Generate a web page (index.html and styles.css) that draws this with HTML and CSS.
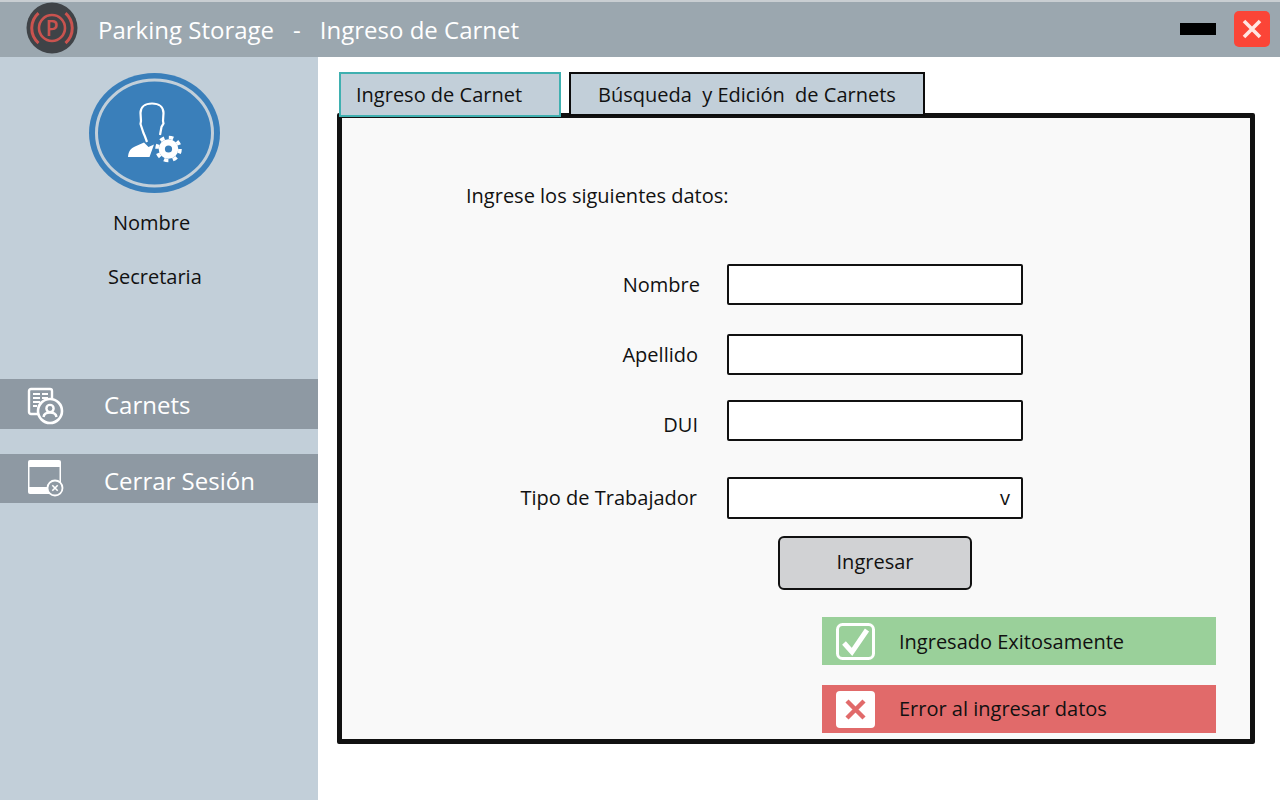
FILE: index.html
```html
<!DOCTYPE html>
<html lang="es">
<head>
    <meta charset="UTF-8">
    <meta name="viewport" content="width=device-width, initial-scale=1.0">
    <title>Parking Storage - Ingreso de Carnet</title>
    <link rel="stylesheet" href="styles.css">
</head>
<body>
    <header class="titlebar">
        <svg class="logo" width="52" height="52" viewBox="0 0 52 52">
            <circle cx="26" cy="26" r="25.5" fill="#3f4347"/>
            <circle cx="26" cy="26" r="13" fill="none" stroke="#c9534f" stroke-width="2.6"/>
            <path d="M12.5 11 A20 20 0 0 0 12.5 41 M39.5 11 A20 20 0 0 1 39.5 41" fill="none" stroke="#c9534f" stroke-width="3"/>
            <text class="logo-letter" x="26" y="33.5" text-anchor="middle">P</text>
        </svg>
        <div class="app-title">Parking Storage</div>
        <div class="app-dash">-</div>
        <div class="app-section">Ingreso de Carnet</div>
        <div class="minimize"></div>
        <div class="close">
            <svg width="20" height="20" viewBox="0 0 20 20">
                <path d="M2 2 L18 18 M18 2 L2 18" stroke="#ffe6e2" stroke-width="3.6"/>
            </svg>
        </div>
    </header>

    <div class="layout">
        <aside class="sidebar">
            <svg class="avatar" width="132" height="120" viewBox="0 0 132 120">
                <ellipse cx="65.5" cy="60" rx="65.5" ry="60" fill="#3a7fba"/>
                <ellipse cx="65.5" cy="60" rx="58" ry="53" fill="#3a7fba" stroke="#c2cfd9" stroke-width="3"/>
                <path d="M58 69 L56 63.5 L54.5 60 L52.5 54 L51.5 51 L52 48 L51.5 40 C51.5 34 56 30.5 63 30.5 C70 30.5 74.5 34 74.5 40 L74 48 L74.5 50.5 L72.5 54 L71 62" fill="none" stroke="#fff" stroke-width="2.2"/>
                <path d="M39 84 C39.5 78 42 75 46 73.5 L55 69.5 L59.5 74 L65 71.5 L60.5 84 Z" fill="#fff"/>
                <circle cx="79.5" cy="76" r="9.8" fill="#fff"/>
                <circle cx="79.5" cy="76" r="11.5" fill="none" stroke="#fff" stroke-width="3.6" stroke-dasharray="4.5 4.53"/>
                <circle cx="79.5" cy="76" r="3.6" fill="#3a7fba"/>
            </svg>
            <div class="user-name">Nombre</div>
            <div class="user-role">Secretaria</div>

            <nav class="menu">
                <a class="menu-item menu-item-carnets">
                    <svg width="40" height="40" viewBox="0 0 40 40">
                        <rect x="3" y="3" width="23" height="25" rx="2" fill="none" stroke="#fff" stroke-width="2.4"/>
                        <path d="M7 8 H14 M16 8 H22 M7 12 H14 M16 12 H22 M7 16 H14 M16 16 H20 M7 20 H11" stroke="#fff" stroke-width="2"/>
                        <circle cx="24" cy="25" r="12" fill="#8e99a3" stroke="#fff" stroke-width="2.6"/>
                        <circle cx="24" cy="22.5" r="3.6" fill="none" stroke="#fff" stroke-width="2.4"/>
                        <path d="M17.5 31 C18 27.5 21 26.5 24 26.5 C27 26.5 30 27.5 30.5 31" fill="none" stroke="#fff" stroke-width="2.4"/>
                    </svg>
                    <span>Carnets</span>
                </a>
                <a class="menu-item menu-item-logout">
                    <svg width="40" height="40" viewBox="0 0 40 40">
                        <path d="M4 2 H33 A2 2 0 0 1 35 4 V34 A2 2 0 0 1 33 36 H4 A2 2 0 0 1 2 34 V4 A2 2 0 0 1 4 2 Z" fill="#fff"/>
                        <rect x="3.5" y="9" width="30" height="20" fill="#8e99a3"/>
                        <circle cx="29" cy="30" r="7.5" fill="#8e99a3" stroke="#fff" stroke-width="1.8"/>
                        <path d="M26.3 27.3 L31.7 32.7 M31.7 27.3 L26.3 32.7" stroke="#fff" stroke-width="1.6"/>
                    </svg>
                    <span>Cerrar Sesión</span>
                </a>
            </nav>
        </aside>

        <main class="content">
            <div class="tabs">
                <div class="tab tab-active">Ingreso de Carnet</div>
                <div class="tab tab-search">Búsqueda&nbsp; y Edición&nbsp; de Carnets</div>
            </div>

            <section class="panel">
                <p class="intro">Ingrese los siguientes datos:</p>

                <form class="form">
                    <div class="row row-nombre">
                        <label class="label">Nombre</label>
                        <div class="field"></div>
                    </div>
                    <div class="row row-apellido">
                        <label class="label label-apellido">Apellido</label>
                        <div class="field"></div>
                    </div>
                    <div class="row row-dui">
                        <label class="label label-dui">DUI</label>
                        <div class="field"></div>
                    </div>
                    <div class="row row-tipo">
                        <label class="label label-tipo">Tipo de Trabajador</label>
                        <div class="field field-select">v</div>
                    </div>
                    <div class="submit">Ingresar</div>
                </form>

                <div class="alert alert-ok">
                    <svg width="39" height="37" viewBox="0 0 39 37">
                        <rect x="1.5" y="1.5" width="36" height="34" rx="5" fill="none" stroke="#fff" stroke-width="3"/>
                        <path d="M8 20 L16 29 L31 7" fill="none" stroke="#fff" stroke-width="5"/>
                    </svg>
                    <span>Ingresado Exitosamente</span>
                </div>
                <div class="alert alert-error">
                    <svg width="39" height="37" viewBox="0 0 39 37">
                        <rect width="39" height="37" rx="4" fill="#fff"/>
                        <path d="M11 10 L28 27 M28 10 L11 27" stroke="#e16a6a" stroke-width="4.4"/>
                    </svg>
                    <span>Error al ingresar datos</span>
                </div>
            </section>
        </main>
    </div>
</body>
</html>
```

FILE: styles.css
```css
* {
    box-sizing: border-box;
}

body {
    margin: 0;
    height: 800px;
    overflow: hidden;
    background-color: #fff;
    color: #111;
    font-family: 'Open Sans', sans-serif;
    font-size: 20px;
}

/* top bar */
.titlebar {
    height: 57px;
    display: flex;
    align-items: center;
    padding-left: 26px;
    background-color: #9ba7af;
    border-top: 2px solid #c9ced2;
    color: #fff;
    font-size: 24px;
}

.logo {
    margin-top: -3px;
}

.logo-letter {
    fill: #c9534f;
    font-family: 'Open Sans', sans-serif;
    font-size: 21px;
    font-weight: 600;
}

.app-title {
    margin-left: 20px;
}

.app-dash {
    margin-left: 19px;
}

.app-section {
    margin-left: 19px;
}

.minimize {
    width: 36px;
    height: 12px;
    margin-left: auto;
    margin-top: -1px;
    background-color: #000;
}

.close {
    width: 36px;
    height: 36px;
    margin: -2px 10px 0 18px;
    display: flex;
    align-items: center;
    justify-content: center;
    border-radius: 5px;
    background-color: #fb4537;
}

.layout {
    display: flex;
    height: 743px;
}

/* sidebar */
.sidebar {
    width: 318px;
    padding-top: 16px;
    display: flex;
    flex-direction: column;
    background-color: #c2cfd9;
}

.avatar {
    margin-left: 89px;
}

.user-name {
    margin-top: 16px;
    margin-left: 113px;
    line-height: 28px;
}

.user-role {
    margin-top: 26px;
    margin-left: 108px;
    line-height: 28px;
}

.menu {
    margin-top: 88px;
}

.menu-item {
    height: 50px;
    display: flex;
    align-items: center;
    padding-left: 26px;
    background-color: #8e99a3;
    color: #fff;
    font-size: 24px;
}

.menu-item span {
    margin-left: 38px;
}

.menu-item-carnets svg {
    margin-top: 4px;
}

.menu-item-logout {
    height: 49px;
    margin-top: 25px;
}

.menu-item-logout svg {
    margin-top: -2px;
}

.menu-item-logout span {
    margin-top: 4px;
}

/* tabs and panel */
.content {
    flex: 1;
    padding: 15px 0 0 19px;
}

.tabs {
    display: flex;
    gap: 8px;
    margin-left: 2px;
    height: 45px;
}

.tab {
    position: relative;
    z-index: 1;
    height: 45px;
    background-color: #c2cfd9;
    border: 2px solid #3fb0b0;
    line-height: 41px;
}

.tab-active {
    width: 222px;
    padding-left: 15px;
}

.tab-search {
    width: 356px;
    height: 44px;
    padding-left: 27px;
    border-color: #0c0c0c;
}

.panel {
    width: 918px;
    height: 631px;
    margin-top: -4px;
    padding-top: 64px;
    background-color: #f9f9f9;
    border: 5px solid #111;
    border-radius: 2px;
}

.intro {
    margin: 0 0 0 124px;
    line-height: 28px;
}

.row {
    display: grid;
    grid-template-columns: 358px 296px;
    column-gap: 27px;
    align-items: center;
}

.row-nombre {
    margin-top: 54px;
}

.row-apellido {
    margin-top: 29px;
}

.row-dui {
    margin-top: 25px;
}

.row-tipo {
    margin-top: 36px;
}

.label {
    text-align: right;
    line-height: 28px;
}

.label-apellido {
    padding-right: 2px;
}

.label-dui {
    padding: 8px 2px 0 0;
}

.label-tipo {
    padding-right: 3px;
}

.field {
    height: 41px;
    background-color: #fff;
    border: 2px solid #111;
    border-radius: 2px;
}

.field-select {
    height: 42px;
    padding-right: 11px;
    text-align: right;
    line-height: 38px;
}

.submit {
    width: 194px;
    height: 54px;
    margin: 17px 0 0 436px;
    background-color: #d1d2d4;
    border: 2px solid #111;
    border-radius: 6px;
    text-align: center;
    line-height: 48px;
}

.alert {
    width: 394px;
    height: 48px;
    margin-left: 480px;
    display: flex;
    align-items: center;
    padding-left: 14px;
}

.alert span {
    margin-left: 24px;
}

.alert-ok {
    margin-top: 27px;
    background-color: #9ad09a;
}

.alert-error {
    margin-top: 20px;
    background-color: #e16a6a;
}

.alert-error span {
    margin-top: -2px;
}
```
